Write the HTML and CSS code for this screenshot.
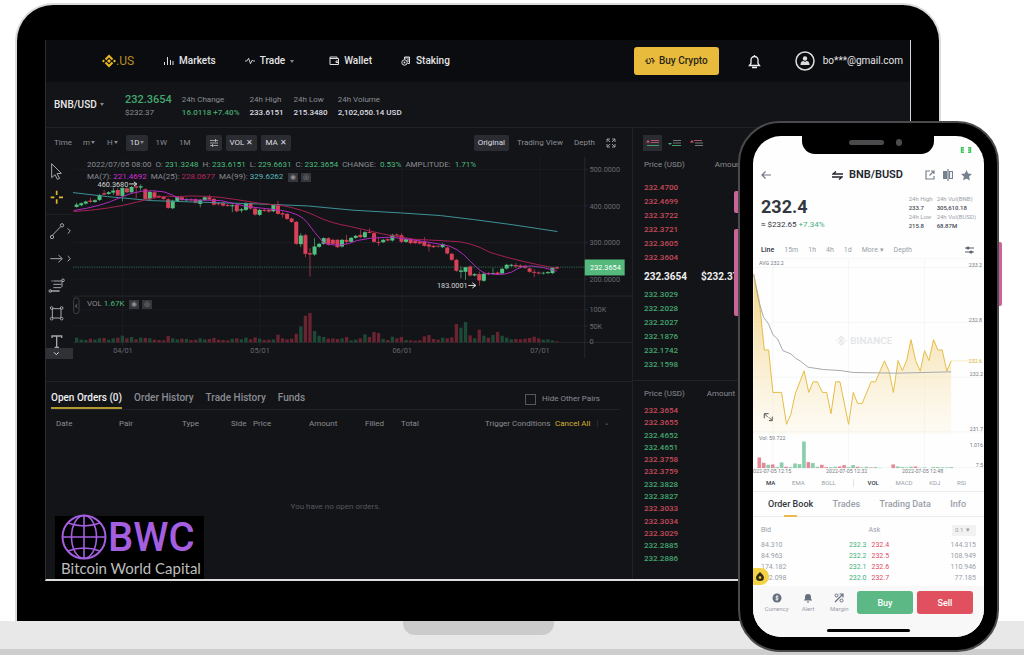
FILE: index.html
```html
<!DOCTYPE html>
<html lang="en">
	<head>
		<meta charset="UTF-8">
		<title>BNB/USD</title>
		<link rel="stylesheet" href="styles.css">
	</head>
	<body>
		<div class="laptop">
			<div class="screen">
				<header class="nav">
					<a class="logo" href="#">
						<svg width="14" height="14" viewBox="0 0 14 14"><path d="M3.500 5.500 7 2l3.500 3.500M3.500 8.500 7 12l3.500-3.500" fill="none" stroke="#e8b923" stroke-width="2"/><path d="M7 5 9 7 7 9 5 7zM1.500 5.500 3 7 1.500 8.500 0 7zM12.500 5.500 14 7l-1.500 1.500L11 7z" fill="#e8b923"/></svg>.US
					</a>
					<a href="#"><svg class="ico" width="11" height="10" viewBox="0 0 11 10"><path d="M1.500 9V6M4.500 9V1M7.500 9V4M10 9V5" stroke="#ddd" fill="none"/></svg>Markets</a>
					<a href="#"><svg class="ico" width="10" height="10" viewBox="0 0 11 10"><path d="M0 5h2l2-3 2 6 2-4 1 1h2" stroke="#ddd" fill="none"/></svg>Trade <i class="caret"></i></a>
					<a href="#"><svg class="ico" width="10" height="10" viewBox="0 0 10 10"><path d="M8 2.500V1H1v7.500h8.500v-6H1M9.500 5H7v1.500h2.500" stroke="#ddd" fill="none"/></svg>Wallet</a>
					<a href="#"><svg class="ico" width="10" height="10" viewBox="0 0 10 10"><path d="M3.500 3.500V1h5v6.500H6.500M5 1v2M7 1v5" stroke="#ddd" fill="none"/><circle cx="3.500" cy="6.500" r="2.700" stroke="#ddd" fill="none"/><circle cx="3.500" cy="6.500" r="1" fill="#ddd"/></svg>Staking</a>
					<button class="buy-crypto"><svg width="10" height="10" viewBox="0 0 10 10"><path d="M0 5h2M8 5h2M2 2.500v5M8 2.500v5M4 2 6 5 4 8M6 2.500h2M2 7.500h2" stroke="#2b2616" fill="none"/></svg>Buy Crypto</button>
					<a class="bell" href="#" aria-label="Notifications"><svg width="13" height="15" viewBox="0 0 13 15"><path d="M1.500 11.500 3 9.500V6a3.500 3.500 0 0 1 7 0v3.500l1.500 2zM6.500 1v2M4 13.500h5" stroke="#eee" stroke-width="1.300" fill="none"/></svg></a>
					<a href="#" class="user"><svg width="20" height="20" viewBox="0 0 20 20"><circle cx="10" cy="10" r="9" fill="none" stroke="#ddd" stroke-width="1.500"/><circle cx="10" cy="7.500" r="2.200" fill="#ddd"/><path d="M5.500 14q0-4 3-4l1.500 1 1.500-1q3 0 3 4z" fill="#ddd"/></svg>bo***@gmail.com</a>
				</header>
				<div class="ticker">
					<button class="pair">BNB/USD <i class="caret"></i></button>
					<div><b class="last">232.3654</b><span>$232.37</span></div>
					<div><span>24h Change</span><b class="up">16.0118 +7.40%</b></div>
					<div><span>24h High</span><b>233.6151</b></div>
					<div><span>24h Low</span><b>215.3480</b></div>
					<div><span>24h Volume</span><b>2,102,050.14 USD</b></div>
				</div>
				<div class="main">
					<section class="market">
						<div class="toolbar">
							<button>Time</button>
							<button class="wide">m<i class="caret"></i></button>
							<button class="wide">H<i class="caret"></i></button>
							<button class="on">1D<i class="caret"></i></button>
							<button>1W</button>
							<button class="last-period">1M</button>
							<button class="on" aria-label="Indicators"><svg width="8" height="8" viewBox="0 0 8 8"><path d="M0 1.500h8M0 4h8M0 6.500h8M5.500 0v3M2.500 5v3" stroke="#bbb" stroke-width=".8"/></svg></button>
							<button class="on">VOL ✕</button>
							<button class="on">MA ✕</button>
							<div class="views">
								<button class="on">Original</button>
								<button>Trading View</button>
								<button>Depth</button>
								<button aria-label="Full screen"><svg width="10" height="10" viewBox="0 0 10 10"><path d="M1 4V1h3M6 1h3v3M9 6v3H6M4 9H1V6M1 1l3 3M9 1 6 4M9 9 6 6M1 9l3-3" stroke="#999" fill="none"/></svg></button>
							</div>
						</div>
						<div class="chart-area">
							<div class="tools">
								<svg viewBox="0 0 81 612"><g fill="none" stroke="#a5a7ae" stroke-width="3"><path d="M17 20l29 29-13 1 8 14-7 3-7-14-10 9z"/><path d="M16 238l28-29"/><circle cx="48" cy="205" r="5"/><circle cx="18" cy="240" r="5"/><path d="M65 214l8 8-8 8M65 297l8 8-8 8M13 305h34M37 294l12 11-12 11"/><path d="M22 372h24M22 382h24M22 392h24M17 402h24M18 374v-4M48 370v20M12 402h28"/><circle cx="51" cy="370" r="4"/><circle cx="13" cy="402" r="4"/><path d="M19 455h26v28H19z"/><circle cx="17" cy="453" r="4"/><circle cx="47" cy="453" r="4"/><circle cx="17" cy="485" r="4"/><circle cx="47" cy="485" r="4"/><path d="M18 543v-6h29v6M32 537v34M26 571h13" stroke-width="4"/></g><path d="M32 101v13M32 127v13M14 121h11M39 121h12" stroke="#e2b530" stroke-width="5"/><path d="M0 172h81" stroke="#2a2b31" stroke-width="2"/><path d="M0 573h81v33H0z" fill="#303136"/><path d="M24 586l7 7 7-7" fill="none" stroke="#ddd" stroke-width="3"/></svg>
							</div>
							<div class="plot">
								<svg id="candles" viewBox="96 21 1680 672"></svg>
								<p class="ohlc">2022/07/05 08:00 &nbsp;O: <b>231.3248</b> &nbsp;H: <b>233.6151</b> &nbsp;L: <b>229.6631</b> &nbsp;C: <b>232.3654</b> &nbsp;CHANGE: &nbsp;<b>0.53%</b> &nbsp;AMPLITUDE: &nbsp;<b>1.71%</b><br>MA(7): <b class="ma7">221.4692</b> &nbsp;MA(25): <b class="ma25">228.0677</b> &nbsp;MA(99): <b class="ma99">329.6262</b> <i class="chip">◉</i><i class="chip">◎</i></p>
								<p class="vol">VOL <b>1.67K</b> <i class="chip">◉</i><i class="chip">◎</i></p>
							</div>
						</div>
						<div class="orders">
							<div class="tabs">
								<a class="current" href="#">Open Orders (0)</a>
								<a href="#">Order History</a>
								<a href="#">Trade History</a>
								<a href="#">Funds</a>
								<label for="hide"><input type="checkbox" id="hide">Hide Other Pairs</label>
							</div>
							<table>
								<thead>
									<tr><th>Date</th><th>Pair</th><th>Type</th><th>Side</th><th>Price</th><th>Amount</th><th>Filled</th><th>Total</th><th>Trigger Conditions</th><th><a href="#">Cancel All</a><i class="more">▪</i></th></tr>
								</thead>
								<tbody>
									<tr><td colspan="10">You have no open orders.</td></tr>
								</tbody>
							</table>
							<div class="bwc">
								<div class="bwc-top"><svg width="46" height="46" viewBox="0 0 46 46"><g fill="none" stroke="#a45fe0" stroke-width="1.600"><circle cx="23" cy="23" r="21.500" stroke-width="2"/><ellipse cx="23" cy="23" rx="12.500" ry="21.500"/><path d="M23 1v44M1 23h44M7 9q16 6 32 0M7 37q16-6 32 0"/></g></svg><strong>BWC</strong></div>
								<span>Bitcoin World Capital</span>
							</div>
						</div>
					</section>
					<aside class="side">
						<div class="book">
							<div class="modes">
								<button class="on" aria-label="Both"><svg width="14" height="8" viewBox="0 0 14 8"><path d="M0 3.500 2 1l2 2.500z" fill="#e0526a"/><path d="M5 1.500h8M5 3.500h8" stroke="#a65566"/><path d="M1 6.500h12" stroke="#3f9a6c"/></svg></button>
								<button aria-label="Bids"><svg width="14" height="8" viewBox="0 0 14 8"><path d="M0 4h4L2 6z" fill="#4fae7c"/><path d="M5 1.500h8M5 4h8" stroke="#777"/><path d="M4 6.500h9" stroke="#3f9a6c"/></svg></button>
								<button aria-label="Asks"><svg width="14" height="8" viewBox="0 0 14 8"><path d="M0 3.500 2 1l2 2.500z" fill="#e0526a"/><path d="M4 1.500h8" stroke="#a65566"/><path d="M5 4h8M5 6.500h8" stroke="#777"/></svg></button>
							</div>
							<div class="head"><span>Price (USD)</span><span>Amount</span></div>
							<ul class="down"><li>232.4700</li><li>232.4699</li><li>232.3722</li><li>232.3721</li><li>232.3605</li><li>232.3604</li></ul>
							<div class="mid"><span>232.3654</span><span>$232.37</span></div>
							<ul class="up"><li>232.3029</li><li>232.2028</li><li>232.2027</li><li>232.1876</li><li>232.1742</li><li>232.1598</li></ul>
						</div>
						<div class="trades">
							<div class="head"><span>Price (USD)</span><span>Amount</span></div>
							<ul><li class="down">232.3654</li><li class="down">232.3655</li><li class="up">232.4652</li><li class="up">232.4651</li><li class="down">232.3758</li><li class="down">232.3759</li><li class="up">232.3828</li><li class="up">232.3827</li><li class="down">232.3033</li><li class="down">232.3034</li><li class="down">232.3029</li><li class="up">232.2885</li><li class="up">232.2886</li></ul>
						</div>
					</aside>
				</div>
			</div>
		</div>
		<div class="base"></div>

		<div class="phone">
			<i class="key key1"></i><i class="key key2"></i><i class="key key3"></i>
			<div class="notch"></div>
			<div class="app">
				<div class="status"><svg width="12" height="6" viewBox="0 0 12 6"><path d="M4 .8H1.500v4.400H4M1 3h3M8 .8h2.500v4.400H8M8 3h3" stroke="#3fc55c" stroke-width="1.400" fill="none"/></svg></div>
				<div class="title">
					<a href="#" aria-label="Back"><svg width="10" height="10" viewBox="0 0 10 10"><path d="M10 5H1M4.500 1.500 1 5l3.500 3.500" stroke="#6f7682" stroke-width="1.200" fill="none"/></svg></a>
					<h1><svg width="11" height="9" viewBox="0 0 11 9"><path d="M11 3H1l3-2.500M0 6h10L7 8.500" stroke="#22262d" stroke-width="1.400" fill="none"/></svg>BNB/BUSD</h1>
					<svg width="10" height="10" viewBox="0 0 10 10"><path d="M5 1H1v8h8V6M6 1h3v3M9 1 4.500 5.500" stroke="#76808e" stroke-width="1.200" fill="none"/></svg>
					<svg width="10" height="12" viewBox="0 0 10 12"><path d="M0 2h4v8H0z" fill="#76808e"/><path d="M5 0v12M6.500 2.500h3v7h-3z" stroke="#76808e" stroke-width="1.200" fill="none"/></svg>
					<svg width="11" height="11" viewBox="0 0 11 11"><path d="M5.500 0 7.100 3.600l3.900.4-2.900 2.600.8 3.900-3.400-2-3.400 2 .8-3.900L0 4l3.900-.4z" fill="#76808e"/></svg>
				</div>
				<div class="quote">
					<div class="now"><strong>232.4</strong><span>≈ $232.65 <em>+7.34%</em></span></div>
					<dl><dt>24h High</dt><dd>233.7</dd><dt>24h Low</dt><dd>215.8</dd></dl>
					<dl><dt>24h Vol(BNB)</dt><dd>305,610.18</dd><dt>24h Vol(BUSD)</dt><dd>68.87M</dd></dl>
				</div>
				<div class="range">
					<button class="sel">Line</button><button>15m</button><button>1h</button><button>4h</button><button>1d</button><button>More ▾</button><button>Depth</button>
					<svg width="9" height="8" viewBox="0 0 9 8"><path d="M0 2h9M0 6h9" stroke="#59616d"/><circle cx="3" cy="2" r="1.600" fill="#59616d"/><circle cx="6" cy="6" r="1.600" fill="#59616d"/></svg>
				</div>
				<svg id="line" viewBox="48 -129 696 660"></svg>
				<div class="indicators">
					<button class="sel">MA</button><button>EMA</button><button>BOLL</button><button class="sel split">VOL</button><button>MACD</button><button>KDJ</button><button>RSI</button>
				</div>
				<div class="sections">
					<a class="current" href="#">Order Book</a><a href="#">Trades</a><a href="#">Trading Data</a><a href="#">Info</a>
				</div>
				<div class="depth">
					<table>
						<thead><tr><th>Bid</th><th></th><th>Ask</th><th><select aria-label="Step"><option>0.1 ▼</option></select></th></tr></thead>
						<tbody>
							<tr><td>84.310</td><td>232.3</td><td>232.4</td><td>144.315</td></tr>
							<tr><td>84.963</td><td>232.2</td><td>232.5</td><td>108.949</td></tr>
							<tr><td>174.182</td><td>232.1</td><td>232.6</td><td>110.946</td></tr>
							<tr><td>102.098</td><td>232.0</td><td>232.7</td><td>77.185</td></tr>
						</tbody>
					</table>
					<i class="flame"><svg width="8" height="9" viewBox="0 0 8 9"><path d="M4 0q4 3.500 4 5.500a4 3.500 0 0 1-8 0Q0 3.500 4 0z" fill="#332a12"/><circle cx="4" cy="5.500" r="1.300" fill="#f4d248"/></svg></i>
				</div>
				<footer>
					<a href="#"><svg width="10" height="10" viewBox="0 0 10 10"><circle cx="5" cy="5" r="4.500" fill="#66707e"/><path d="M6.500 3.300h-2a1 1 0 0 0 0 1.700h1a1 1 0 0 1 0 1.700h-2M5 2.300v5.400" stroke="#fff" stroke-width=".8" fill="none"/></svg>Currency</a>
					<a href="#"><svg width="10" height="10" viewBox="0 0 10 10"><path d="M1 7.500V7l1-1V4a3 3 0 0 1 6 0v2l1 1v.5zM3.500 8.500h3L5 10z" fill="#66707e"/></svg>Alert</a>
					<a href="#"><svg width="10" height="10" viewBox="0 0 10 10"><path d="M1 9 9 1M5.500 1H9v3.500" stroke="#66707e" stroke-width="1.200" fill="none"/><circle cx="2.500" cy="2.500" r="1.500" fill="none" stroke="#66707e"/><circle cx="7.500" cy="7.500" r="1.500" fill="none" stroke="#66707e"/></svg>Margin</a>
					<button class="buy">Buy</button>
					<button class="sell">Sell</button>
				</footer>
				<div class="home"></div>
			</div>
		</div>
		<script src="charts.js"></script>
	</body>
</html>
```
FILE: styles.css
```css
* {
	margin: 0;
	padding: 0;
	box-sizing: border-box;
}
body {
	position: relative;
	background: #fff;
	font-family: Roboto, "Liberation Sans", sans-serif;
	font-size: 8px;
	line-height: 10px;
	color: #8a8c92;
	overflow-x: hidden;
}
a {
	color: inherit;
	text-decoration: none;
}
button, select, input {
	border: none;
	background: none;
	color: inherit;
	font: inherit;
}
button {
	cursor: pointer;
}
svg {
	display: block;
	flex-shrink: 0;
}
ul {
	list-style: none;
}
i {
	font-style: normal;
}
.caret {
	display: inline-block;
	border: 2px solid transparent;
	border-top: 3px solid #85878d;
	border-bottom: none;
	vertical-align: middle;
	margin-left: 1px;
}
.up {
	color: #43a76f;
}
.down {
	color: #c84a5a;
}

/* laptop */
.laptop {
	margin: 3px 83px 0 15px;
	padding: 35px 28px 40px;
	background: #000;
	border: 2px solid #dcdcdc;
	border-bottom: none;
	border-radius: 38px 38px 0 0;
}
.base {
	height: 34px;
	background: #e8e8e8;
	border-bottom: 6px solid #cdcdcd;
}
.base::before {
	content: "";
	display: block;
	width: 151px;
	height: 14px;
	margin-left: 403px;
	background: #cbcbcb;
	border-radius: 0 0 12px 12px;
}
.screen {
	background: #131418;
	border-left: 1px solid #2c2d31;
	border-right: 1px solid #d5d5d5;
	border-bottom: 2px solid #dedede;
}
.nav {
	display: flex;
	align-items: center;
	gap: 29px;
	height: 42px;
	padding: 0 7px 0 56px;
	background: #0b0c10;
	color: #e4e4e6;
	font-size: 10px;
	font-weight: 500;
}
.nav a {
	display: flex;
	align-items: center;
}
.nav .ico {
	margin-right: 5px;
}
.nav .caret {
	margin: 0 6px 0 5px;
}
.nav .logo {
	color: #b98e22;
	font-size: 12px;
	font-weight: 400;
}
.nav .buy-crypto {
	display: flex;
	align-items: center;
	gap: 4px;
	height: 28px;
	margin-left: auto;
	padding: 0 11px;
	border-radius: 3px;
	background: #e8bb3d;
	color: #2b2616;
}
.nav .user {
	gap: 8px;
	margin-left: 5px;
	font-weight: 400;
}
.ticker {
	display: flex;
	align-items: center;
	gap: 10px;
	height: 46px;
	padding-left: 8px;
	border-bottom: 1px solid #212227;
}
.ticker .pair {
	width: 61px;
	color: #e8e8ea;
	font-size: 10px;
	font-weight: 500;
	text-align: left;
}
.ticker div {
	display: flex;
	flex-direction: column;
	gap: 3px;
	padding-top: 3px;
}
.ticker b {
	color: #dedee0;
	font-weight: 500;
}
.ticker .up, .ticker .last {
	color: #43a76f;
}
.ticker .last {
	font-size: 11px;
}
.main {
	display: flex;
}
.market {
	flex: 1;
	min-width: 0;
}
.toolbar {
	display: flex;
	align-items: center;
	gap: 4px;
	height: 29px;
	padding: 0 13px 0 5px;
}
.toolbar button {
	height: 16px;
	padding: 0 3px;
	border-radius: 2px;
}
.toolbar .wide {
	padding: 0 4px;
}
.toolbar .last-period {
	margin: 0 8px 0 2px;
}
.toolbar .on, .modes .on {
	background: #2b2c31;
	color: #dcdce0;
}
.toolbar .on {
	padding: 0 4px;
}
.views {
	display: flex;
	gap: 5px;
	margin-left: auto;
}

/* chart */
.chart-area {
	display: flex;
	border-bottom: 1px solid #212227;
}
.tools {
	width: 27px;
}
.plot {
	position: relative;
	flex: 1;
}
.grid {
	stroke: #1e2025;
	stroke-width: 2;
}
.axis {
	stroke: #303238;
	stroke-width: 2;
}
#candles text {
	font-size: 22px;
	fill: #686a70;
}
#candles .note {
	fill: #d4d4d6;
}
#candles .tag {
	fill: #fff;
}
.ohlc, .vol {
	position: absolute;
	left: 14px;
	top: 2px;
	line-height: 12px;
	white-space: nowrap;
}
.vol {
	top: 141px;
}
.ohlc b, .vol b {
	font-weight: 400;
	color: #4bbd7b;
}
.ohlc .ma7 {
	color: #d32bd8;
}
.ohlc .ma25 {
	color: #b82860;
}
.ohlc .ma99 {
	color: #5ab9bd;
}
.chip {
	display: inline-block;
	width: 10px;
	height: 9px;
	margin-left: 3px;
	background: #35373d;
	color: #8e9096;
	font-size: 7px;
	line-height: 9px;
	text-align: center;
}

/* orders */
.orders {
	position: relative;
	height: 197px;
	padding: 0 12px 0 5px;
}
.tabs {
	display: flex;
	align-items: center;
	gap: 12px;
	height: 28px;
	border-bottom: 1px solid #212227;
	font-size: 10px;
	font-weight: 500;
}
.tabs a {
	padding-top: 6px;
	line-height: 19px;
	border-bottom: 2px solid transparent;
}
.tabs .current {
	color: #f0f0f2;
	border-color: #b39a2c;
}
.tabs label {
	display: flex;
	align-items: center;
	gap: 6px;
	margin: 8px 20px 0 auto;
	font-size: 8px;
	font-weight: 400;
}
.tabs input {
	appearance: none;
	width: 11px;
	height: 11px;
	border: 1px solid #55575d;
}
.orders table {
	width: 100%;
	table-layout: fixed;
	border-collapse: collapse;
}
.orders th {
	height: 28px;
	padding-left: 5px;
	width: 63px;
	font-weight: 400;
	text-align: left;
	white-space: nowrap;
}
.orders th:nth-child(3) {
	width: 49px;
}
.orders th:nth-child(4) {
	width: 22px;
}
.orders th:nth-child(5), .orders th:nth-child(6) {
	width: 56px;
}
.orders th:nth-child(7) {
	width: 36px;
}
.orders th:nth-child(8) {
	width: 84px;
}
.orders th:nth-child(9) {
	width: 70px;
}
.orders th:nth-child(10) {
	width: auto;
	color: #d6b132;
}
.orders .more {
	margin-left: 7px;
	padding-left: 7px;
	border-left: 1px solid #2a2b30;
	color: #55575d;
	font-size: 6px;
}
.orders td {
	height: 138px;
	color: #55575d;
	text-align: center;
}
.bwc {
	position: absolute;
	left: 9px;
	bottom: 0;
	width: 149px;
	height: 63px;
	padding: 0 6px;
	background: #000;
	color: #bdbdbd;
	font-family: Lato, sans-serif;
	font-size: 15px;
	line-height: 18px;
	white-space: nowrap;
}
.bwc-top {
	display: flex;
	align-items: center;
	gap: 1px;
	height: 43px;
}
.bwc strong {
	color: #a45fe0;
	font-family: Roboto, sans-serif;
	font-size: 40px;
	font-weight: 500;
	line-height: 43px;
}

/* order book */
.side {
	display: flex;
	flex-direction: column;
	width: 278px;
	border-left: 1px solid #212227;
}
.side ul {
	padding-left: 11px;
}
.book {
	height: 253px;
	border-bottom: 1px solid #212227;
}
.book li {
	line-height: 14px;
}
.modes {
	display: flex;
	gap: 3px;
	height: 29px;
	padding: 7px 10px;
}
.modes button {
	display: flex;
	align-items: center;
	width: 19px;
	height: 16px;
	padding: 0 3px;
}
.head {
	display: flex;
	gap: 22px;
	padding: 3px 11px;
}
.book .head {
	gap: 30px;
	margin-bottom: 8px;
}
.mid {
	display: flex;
	gap: 14px;
	padding-left: 11px;
	color: #eee;
	font-size: 10px;
	font-weight: 700;
	line-height: 23px;
}
.trades {
	display: flex;
	flex: 1;
	flex-direction: column;
	padding: 5px 0 15px;
}
.trades ul {
	display: flex;
	flex: 1;
	flex-direction: column;
	justify-content: space-between;
	padding-top: 4px;
}
.book li, .trades li {
	font-weight: 500;
}

/* phone */
.phone {
	position: absolute;
	top: 121px;
	right: 25px;
	width: 261px;
	padding: 13px;
	background: #000;
	border: 2px solid #4a4a4c;
	border-radius: 42px;
	color: #9a9fa8;
	font-size: 7px;
	line-height: 8px;
}
.key {
	position: absolute;
	left: -6px;
	top: 68px;
	width: 4px;
	height: 22px;
	background: #c9649a;
	border-radius: 2px 0 0 2px;
}
.key2 {
	top: 106px;
	height: 87px;
}
.key3 {
	left: auto;
	right: -5px;
	top: 119px;
	height: 64px;
	width: 3px;
	border-radius: 0 2px 2px 0;
}
.notch {
	position: absolute;
	top: 13px;
	left: 62px;
	right: 63px;
	height: 18px;
	background: #000;
	border-radius: 0 0 13px 13px;
}
.notch::before, .notch::after {
	content: "";
	position: absolute;
	top: 4px;
	left: 47px;
	width: 35px;
	height: 5px;
	background: #4b4b4d;
	border-radius: 3px;
}
.notch::after {
	top: 3px;
	left: 94px;
	width: 6px;
	height: 7px;
}
.app {
	background: #fefefe;
	border-radius: 28px;
	overflow: hidden;
}
.status {
	display: flex;
	justify-content: flex-end;
	padding: 11px 12px 0 0;
}
.title {
	display: flex;
	align-items: center;
	gap: 8px;
	height: 41px;
	padding: 3px 12px 0 8px;
}
.title h1 {
	display: flex;
	align-items: center;
	gap: 6px;
	margin: 0 14px 0 auto;
	color: #22262d;
	font-size: 11px;
	font-weight: 600;
}
.quote {
	display: flex;
	gap: 4px;
	height: 48px;
	padding: 0 8px;
	font-size: 6px;
	line-height: 9px;
}
.quote dd {
	color: #454a53;
	font-weight: 500;
}
.now {
	flex: 1;
	color: #33373f;
	font-size: 8px;
}
.now strong {
	display: block;
	padding-top: 1px;
	font-size: 18px;
	line-height: 23px;
}
.now span {
	display: block;
	line-height: 14px;
}
.now em {
	color: #43b27a;
	font-style: normal;
}
.range {
	display: flex;
	align-items: center;
	gap: 10px;
	height: 16px;
	padding: 0 10px 0 8px;
}
.range svg {
	margin-left: auto;
}
.sel {
	color: #33373f;
	font-weight: 500;
}
#line {
	width: 100%;
}
#line text {
	font-size: 16px;
	fill: #747a84;
}
#line .price {
	fill: #d9ae34;
}
#line .mark {
	font-size: 30px;
	font-weight: 600;
	fill: #e4e6e8;
}
.mesh {
	stroke: #f0f1f2;
	stroke-width: 2;
}
.indicators {
	display: flex;
	align-items: center;
	justify-content: space-between;
	height: 15px;
	padding: 0 18px 2px 13px;
	border-bottom: 1px solid #ececee;
	font-size: 6px;
}
.indicators .split {
	padding-left: 14px;
	border-left: 1px solid #e4e4e6;
}
.sections {
	display: flex;
	justify-content: space-between;
	height: 25px;
	padding: 0 18px 0 15px;
	border-bottom: 1px solid #ececee;
	font-size: 9px;
	font-weight: 500;
	line-height: 24px;
}
.sections .current {
	color: #33373f;
}
.sections .current::after {
	content: "";
	display: block;
	width: 13px;
	height: 2px;
	margin: -1px auto 0;
	background: #edb94a;
}
.depth {
	position: relative;
	padding: 4px 8px 3px;
}
.depth table {
	width: 100%;
	table-layout: fixed;
	border-collapse: collapse;
}
.depth th {
	height: 18px;
	font-weight: 400;
	text-align: left;
}
.depth td {
	height: 11px;
}
.depth td:nth-child(2) {
	width: 25%;
	color: #43b27a;
	text-align: right;
	padding-right: 2px;
}
.depth td:nth-child(3) {
	color: #e0485e;
	padding-left: 3px;
}
.depth th:last-child, .depth td:last-child {
	text-align: right;
}
.depth select {
	appearance: none;
	width: 24px;
	height: 11px;
	padding: 0 3px;
	background: #f2f2f3;
	font-size: 6px;
}
.flame {
	position: absolute;
	left: 0;
	bottom: 1px;
	padding: 4px 5px 4px 3px;
	background: #f4d248;
	border-radius: 0 9px 9px 0;
}
.app footer {
	display: flex;
	align-items: center;
	gap: 4px;
	height: 35px;
	padding: 0 11px 2px 10px;
	background: #f8f8f9;
	font-size: 6px;
}
.app footer a {
	display: flex;
	flex: 1;
	flex-direction: column;
	align-items: center;
	gap: 2px;
}
.app footer button {
	width: 56px;
	height: 23px;
	border-radius: 3px;
	background: #5cb985;
	color: #fff;
	font-size: 9px;
	font-weight: 500;
}
.app footer .sell {
	background: #e1505f;
}
.home {
	padding: 8px 74px 5px;
	background: #f8f8f9;
}
.home::before {
	content: "";
	display: block;
	height: 3px;
	background: #000;
	border-radius: 2px;
}
```
FILE: charts.js
```javascript
(function() {
	// direction, body top, body bottom, wick top, wick bottom
	var days = 'g164,171,158,173 g160,166 g155,161 r152,156,143,158 g151,156 g135,150 r130,134,120,136 g127,132 g122,128,113,135 r120,137,114,137 ' +
		'g114,138,112,154 r115,127 g111,127 r109,113,105,145 g109,113,103,122 r118,147 g126,148 r127,143 r138,142 r141,147 ' +
		'r148,174 g152,175 g141,153 r142,150 g148,151 r148,151 r148,158 g150,162,148,172 g142,150 r142,149,134,150 ' +
		'r147,164 r160,163 r160,167 r165,168 g166,169,160,187 r165,184 g178,182,174,188 g160,180 r160,176 r176,194 ' +
		'g180,195 r180,183 r180,185 g165,184 r163,192,153,194 r190,194,185,203 r192,207 r206,216 r216,282 g257,283,250,292 ' +
		'r256,312,252,322 r310,314,295,380 g290,314,265,318 g282,291 g265,282 r265,284 r270,282 r270,292 g270,290 r270,276,255,283 ' +
		'g264,276 g258,264 r255,262,240,265 g247,262 r246,249,235,250 r250,276 r276,279,262,288 g270,277 r268,272 g255,272 ' +
		'r254,257 r256,276,250,280 g268,276 r268,280 r272,280 r275,281 r275,288,262,290 r284,290,278,305 r288,292 r288,290 ' +
		'g283,292 r293,311 r312,330 r330,363 g362,366,350,385 g352,366,352,390 r350,377 g373,377 r373,392,365,408 g372,393 ' +
		'r370,373 g370,373,355,373 r368,373 g357,371 g345,356 g345,348 r346,350,340,355 r347,352 r348,354 r356,366 ' +
		'r366,369,358,382 r368,371 g369,371 g367,370 g354,370 r352,356';
	var volumes = [14, 8, 7, 11, 8, 12, 13, 8, 12, 14, 20, 12, 16, 9, 14, 13, 12, 8, 7, 6, 19, 12, 9, 11, 10, 7, 8, 12, 9, 10,
		13, 8, 7, 6, 11, 12, 9, 14, 9, 15, 11, 7, 8, 9, 23, 12, 9, 11, 26, 48, 80, 88, 34, 20, 16, 11, 12, 10, 12, 16,
		6, 8, 12, 24, 16, 31, 28, 10, 7, 17, 12, 16, 7, 6, 5, 6, 18, 22, 10, 8, 14, 12, 15, 55, 44, 61, 21, 12, 38, 20,
		14, 22, 31, 20, 14, 9, 10, 9, 11, 13, 17, 12, 8, 9, 6, 3];
	var out = '';

	[58, 168, 278, 388, 480, 529].forEach(function(y) {
		out += '<path class="grid" d="M96 ' + y + 'H1634"/><path class="axis" d="M1634 ' + y + 'h10"/>';
	});
	[245, 658, 1085, 1498].forEach(function(x) {
		out += '<path class="grid" d="M' + x + ' 21V578"/><path class="axis" d="M' + x + ' 578v10"/>';
	});
	out += '<path class="axis" d="M96 439H1776M96 578H1776M1634 21V625"/>';
	days.split(' ').forEach(function(day, n) {
		var v = day.slice(1).split(',').map(Number);
		var x = 107 + n * 13.75;
		var up = day.charAt(0) == 'g';
		var color = up ? '#4fc27f' : '#d9405a';
		var top = v[2] || v[0] - 3, bottom = v[3] || v[1] + 3;
		out += '<rect x="' + (x - 5) + '" y="' + (578 - volumes[n]) + '" width="10" height="' + volumes[n] + '" fill="' + (up ? '#1d4a36' : '#6a2331') + '"/>';
		out += '<rect x="' + (x - 1) + '" y="' + top + '" width="2" height="' + (bottom - top) + '" fill="' + color + '"/>';
		out += '<rect x="' + (x - 6) + '" y="' + v[0] + '" width="12" height="' + (v[1] - v[0]) + '" fill="' + color + '"/>';
	});
	out += '<g fill="none" stroke-width="3">' +
		'<path stroke="#3d9296" d="M96 128 200 140 330 152 450 156 650 162 800 168 940 181 1080 189 1200 197 1300 209 1420 225 1552 245"/>' +
		'<path stroke="#a5214f" d="M98 185Q210 178 290 156T400 140Q500 134 580 148T730 168Q790 180 830 200T930 230L1030 253 1120 268 1230 274Q1290 274 1350 308 1440 336 1552 356"/>' +
		'<path stroke="#b12ac0" d="M98 182Q180 170 240 142T370 126Q400 135 420 149L540 152 620 170 720 181Q780 190 800 218T850 280Q900 295 950 272L990 265 1050 262 1120 270 1210 285Q1250 290 1290 334T1350 372Q1400 380 1430 358T1550 364"/></g>';
	out += '<path stroke="#3a8a62" stroke-width="2" stroke-dasharray="4 3" d="M96 352H1634"/>' +
		'<rect x="1634" y="329" width="120" height="48" fill="#55b97d"/>' +
		'<text class="tag" x="1650" y="360">232.3654</text>' +
		'<text x="1648" y="66">500.0000</text><text x="1648" y="176">400.0000</text>' +
		'<text x="1648" y="286">300.0000</text><text x="1648" y="397">200.0000</text>' +
		'<text x="1648" y="488">100K</text><text x="1648" y="537">50K</text><text x="1648" y="582">0</text>' +
		'<text x="217" y="609">04/01</text><text x="629" y="609">05/01</text><text x="1056" y="609">06/01</text><text x="1470" y="609">07/01</text>' +
		'<text class="note" x="170" y="110">460.3680</text><text class="note" x="1190" y="414">183.0001</text>' +
		'<path d="M265 102h22M279 96l9 6-9 6M1284 407h22M1296 399l11 8-11 8" fill="none" stroke="#ddd" stroke-width="3"/>' +
		'<rect x="98" y="444" width="16" height="48" rx="8" fill="#131418" stroke="#55575d" stroke-width="2"/><path d="M109 464l-6 5 6 5" fill="none" stroke="#aaa" stroke-width="2"/>';
	document.getElementById('candles').innerHTML = out;

	var line = '50,-80 67,0 82,148 95,148 108,276 134,276 149,372 162,342 176,278 202,211 216,276 229,244 242,244 257,276 270,276 283,340 297,244 310,244 ' +
		'336,372 350,276 363,309 377,309 404,244 417,244 444,181 458,212 471,276 485,180 498,210 511,180 524,117 538,180 552,212 565,150 578,180 592,117 605,148 618,148 632,212 645,181';
	var bars = [0, -32, -16, 10, -11, 3, 17, -4, 3, 14, 12, 80, -18, 15, 4, -10, -3, 3, 4, -5, -9, 3, 9, -4, 2, 4, -2, 3, 1, 0, 0, -11, 5, 3, 2, 4, -5, 1, 2, 0, 3, 3, 2, 2, 3];
	out = '<defs><linearGradient id="fade" x1="0" y1="0" x2="0" y2="1"><stop offset="0" stop-color="#eec45a" stop-opacity=".75"/><stop offset="1" stop-color="#f6dfa2" stop-opacity=".1"/></linearGradient></defs>';
	out += '<path class="mesh" fill="none" d="M48 -128H744M48 -100H744M48 65H744M48 230H744M48 395H744M48 503H744M108 -128V503M336 -128V503M565 -128V503"/>';
	out += '<path d="M304 117 314 107 324 117M304 123 314 133 324 123M314 116l4 4-4 4-4-4zM297 120h4M327 120h4" fill="none" stroke="#e4e6e8" stroke-width="4"/><text class="mark" x="341" y="131">BINANCE</text>';
	out += '<polygon fill="url(#fade)" points="48,402 ' + line + ' 645,402"/>';
	out += '<polyline fill="none" stroke="#e5bc45" stroke-width="3" points="' + line + '"/>';
	out += '<path d="M645 181H700" stroke="#f3e0a8" stroke-width="2"/>';
	out += '<path fill="none" stroke="#a5a8ac" stroke-width="3" d="M50 -80 65 0 80 50 95 70 108 102 122 115 138 150 162 160 176 173 190 181 214 200 260 207 310 210 350 216 480 218 645 214"/>';
	bars.forEach(function(v, n) {
		var h = Math.abs(v);
		out += '<rect x="' + (48 + n * 13.45) + '" y="' + (504 - h) + '" width="11" height="' + h + '" fill="' + (v < 0 ? '#e58a98' : '#8ccdac') + '"/>';
	});
	out += '<path d="M82 354V340H95M83 341l9 9M96 361h10v-12M105 360l-9-9" fill="none" stroke="#555" stroke-width="3"/>' +
		'<text x="66" y="-108">AVG 232.2</text><text x="698" y="-102">233.2</text><text x="698" y="63">232.8</text>' +
		'<text class="price" x="698" y="188">232.6</text><text x="701" y="228">232.2</text><text x="701" y="393">231.7</text>' +
		'<text x="66" y="419">Vol: 59.722</text><text x="701" y="439">1.016</text><text x="719" y="501">7.5</text>' +
		'<text x="48" y="520">022-07-05 12:15</text><text x="268" y="520">2022-07-05 12:32</text><text x="497" y="520">2022-07-05 12:48</text>';
	document.getElementById('line').innerHTML = out;
}());
```
